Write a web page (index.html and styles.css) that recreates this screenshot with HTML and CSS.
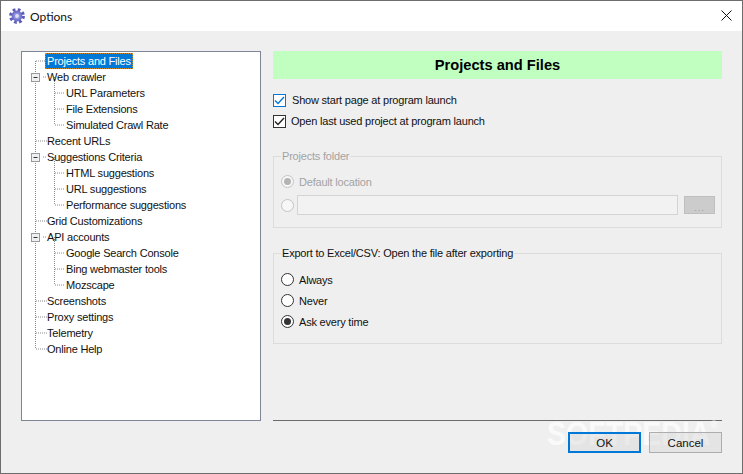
FILE: index.html
```html
<!DOCTYPE html>
<html lang="en">
<head>
<meta charset="utf-8">
<title>Options</title>
<link rel="stylesheet" href="styles.css">
</head>
<body>
<div class="window">
  <header class="titlebar">
    <svg class="app-icon" width="16" height="16" viewBox="0 0 16 16">
      <circle cx="8" cy="8" r="6.2" fill="none" stroke="#5c5cb8" stroke-width="3.4" stroke-dasharray="2.6 2.27"/>
      <circle cx="8" cy="8" r="5.4" fill="#6f70c8"/>
      <circle cx="8" cy="8" r="3.6" fill="#8d8fdc"/>
      <circle cx="8" cy="8" r="1.9" fill="#dfe0f5"/>
    </svg>
    <span class="title">Options</span>
    <svg class="close" width="11" height="11" viewBox="0 0 11 11">
      <path d="M0.5 0.5 L10.5 10.5 M10.5 0.5 L0.5 10.5" stroke="#111" stroke-width="1" fill="none"/>
    </svg>
  </header>
  <main class="content">
    <nav class="tree">
      <svg class="tree-lines" width="238" height="368" viewBox="0 0 238 368">
        <g class="dots">
          <path d="M13.5 9 V297"/>
          <path d="M32.5 25 V73 M32.5 105 V153 M32.5 185 V233"/>
          <path d="M14 9 H23 M21 25 H25 M14 89 H25 M21 105 H25 M14 169 H25 M21 185 H25 M14 249 H25 M14 265 H25 M14 281 H25 M14 297 H25"/>
          <path d="M33 41 H43 M33 57 H43 M33 73 H43 M33 121 H43 M33 137 H43 M33 153 H43 M33 201 H43 M33 217 H43 M33 233 H43"/>
        </g>
        <g class="expander">
          <rect x="9.5" y="21.5" width="8" height="8"/><path d="M11.5 25.5 H15.5"/>
          <rect x="9.5" y="101.5" width="8" height="8"/><path d="M11.5 105.5 H15.5"/>
          <rect x="9.5" y="181.5" width="8" height="8"/><path d="M11.5 185.5 H15.5"/>
        </g>
      </svg>
      <ul class="tree-list">
        <li class="node top"><span class="label selected">Projects and Files</span></li>
        <li class="node top"><span class="label">Web crawler</span></li>
        <li class="node sub"><span class="label">URL Parameters</span></li>
        <li class="node sub"><span class="label">File Extensions</span></li>
        <li class="node sub"><span class="label">Simulated Crawl Rate</span></li>
        <li class="node top"><span class="label">Recent URLs</span></li>
        <li class="node top"><span class="label">Suggestions Criteria</span></li>
        <li class="node sub"><span class="label">HTML suggestions</span></li>
        <li class="node sub"><span class="label">URL suggestions</span></li>
        <li class="node sub"><span class="label">Performance suggestions</span></li>
        <li class="node top"><span class="label">Grid Customizations</span></li>
        <li class="node top"><span class="label">API accounts</span></li>
        <li class="node sub"><span class="label">Google Search Console</span></li>
        <li class="node sub"><span class="label">Bing webmaster tools</span></li>
        <li class="node sub"><span class="label">Mozscape</span></li>
        <li class="node top"><span class="label">Screenshots</span></li>
        <li class="node top"><span class="label">Proxy settings</span></li>
        <li class="node top"><span class="label">Telemetry</span></li>
        <li class="node top"><span class="label">Online Help</span></li>
      </ul>
    </nav>
    <section class="panel">
      <h1 class="panel-title">Projects and Files</h1>
      <div class="checks">
        <div class="check-row">
          <span class="checkbox hover"><svg width="11" height="11" viewBox="0 0 11 11"><path d="M1 5.5 L4 8.5 L10 2" fill="none" stroke="#0078d7" stroke-width="1.4"/></svg></span>
          <span class="check-label">Show start page at program launch</span>
        </div>
        <div class="check-row second">
          <span class="checkbox"><svg width="11" height="11" viewBox="0 0 11 11"><path d="M1 5.5 L4 8.5 L10 2" fill="none" stroke="#222" stroke-width="1.4"/></svg></span>
          <span class="check-label">Open last used project at program launch</span>
        </div>
      </div>
      <div class="group folder">
        <span class="legend disabled">Projects folder</span>
        <div class="radio-row disabled-row">
          <span class="radio off on"></span>
          <span class="radio-label disabled">Default location</span>
        </div>
        <div class="path-row">
          <span class="radio off"></span>
          <span class="path-input"></span>
          <span class="browse">...</span>
        </div>
      </div>
      <div class="group export">
        <span class="legend">Export to Excel/CSV: Open the file after exporting</span>
        <div class="radio-row"><span class="radio"></span><span class="radio-label">Always</span></div>
        <div class="radio-row"><span class="radio"></span><span class="radio-label">Never</span></div>
        <div class="radio-row"><span class="radio on"></span><span class="radio-label">Ask every time</span></div>
      </div>
      <div class="spacer"></div>
      <hr class="divider">
      <div class="buttons">
        <button class="btn ok" type="button">OK</button>
        <button class="btn cancel" type="button">Cancel</button>
      </div>
    </section>
  </main>
  <div class="watermark">SOFTPEDIA<sup class="reg">®</sup></div>
</div>
</body>
</html>
```

FILE: styles.css
```css
* { box-sizing: border-box; }
html, body { margin: 0; padding: 0; }
body {
  width: 743px;
  height: 474px;
  overflow: hidden;
  font-family: "Liberation Sans", Arial, sans-serif;
  font-size: 11px;
  letter-spacing: -0.2px;
  color: #111;
}
.window {
  position: relative;
  width: 743px;
  height: 474px;
  display: flex;
  flex-direction: column;
  background: #efefef;
  border: 1px solid #6d6d6d;
  overflow: hidden;
}
.titlebar {
  flex: none;
  height: 30px;
  background: #fff;
  display: flex;
  align-items: center;
  padding: 0 10px 0 8px;
}
.app-icon { flex: none; margin-right: 5px; }
.title { flex: 1; font-family: "Lato", "Open Sans", sans-serif; font-size: 12px; letter-spacing: 0; }
.close { flex: none; margin-bottom: 1px; }

.content {
  flex: 1;
  display: flex;
  gap: 12px;
  padding: 20px 20px 20px 20px;
  min-height: 0;
}
.tree {
  position: relative;
  flex: none;
  width: 240px;
  height: 370px;
  background: #fff;
  border: 1px solid #7f8796;
}
.tree-lines { position: absolute; left: 0; top: 0; }
.dots path { stroke: #8a8a8a; stroke-width: 1; stroke-dasharray: 1 1; fill: none; }
.expander rect { fill: #eef0f2; stroke: #9a9a9a; stroke-width: 1; }
.expander path { stroke: #333; stroke-width: 1; fill: none; }
.tree-list { position: relative; list-style: none; margin: 0; padding: 1px 0 0; }
.node { height: 16px; line-height: 16px; white-space: nowrap; }
.node.top { padding-left: 23px; }
.node.sub { padding-left: 42px; }
.label { display: inline-block; height: 16px; padding: 0 2px; }
.label.selected {
  background: #0078d7;
  color: #fff;
  outline: 1px dotted #c98a2b;
  outline-offset: -1px;
}

.panel { flex: 1; display: flex; flex-direction: column; min-width: 0; }
.panel-title {
  margin: 0;
  height: 28px;
  background: #c0ffc0;
  text-align: center;
  font-size: 14.67px;
  font-weight: 700;
  line-height: 28px;
  letter-spacing: 0;
  color: #000;
}
.checks { padding-top: 13px; }
.check-row { display: flex; align-items: center; height: 16px; gap: 6px; }
.check-row.second { margin-top: 5px; gap: 5px; }
.checkbox {
  flex: none;
  width: 13px;
  height: 13px;
  border: 1px solid #333;
  background: #fff;
  display: flex;
  align-items: center;
  justify-content: center;
}
.checkbox.hover { border-color: #0078d7; }
.check-label { line-height: 16px; }

.group {
  position: relative;
  border: 1px solid #dcdcdc;
  padding-left: 7px;
}
.group.folder { margin-top: 27px; height: 72px; padding-top: 14px; }
.group.export { margin-top: 25px; height: 91px; border-color: #dcdcdc; padding-top: 15px; }
.legend {
  position: absolute;
  left: 7px;
  top: -9px;
  padding: 0 1px;
  line-height: 16px;
  background: #efefef;
}
.disabled { color: #a3a3a3; }
.radio-row { display: flex; align-items: center; height: 21px; gap: 5px; }
.radio {
  flex: none;
  position: relative;
  width: 13px;
  height: 13px;
  border-radius: 50%;
  border: 1px solid #333;
  background: #fff;
  display: flex;
  align-items: center;
  justify-content: center;
}
.radio.on::after {
  content: "";
  width: 7px;
  height: 7px;
  border-radius: 50%;
  background: #333;
}
.radio.off { border-color: #c4c4c4; background: #f7f7f7; }
.radio.off.on::after { background: #b4b4b4; }
.path-row { display: flex; align-items: center; height: 20px; margin-top: 3px; }
.path-input {
  flex: none;
  width: 381px;
  height: 20px;
  margin-left: 3px;
  background: #f2f2f2;
  border: 1px solid #d4d4d4;
}
.browse {
  flex: none;
  width: 31px;
  height: 18px;
  margin-left: 6px;
  background: #cccccc;
  border: 1px solid #bfbfbf;
  color: #9a9a9a;
  text-align: center;
  line-height: 22px;
  font-size: 9px;
  letter-spacing: 1px;
}
.spacer { flex: 1; }
.divider { margin: 0; border: 0; height: 1px; background: #6b6b6b; flex: none; }
.buttons {
  position: relative;
  z-index: 1;
  flex: none;
  display: flex;
  justify-content: flex-end;
  gap: 8px;
  height: 32px;
  padding-top: 11px;
}
.btn {
  height: 21px;
  padding: 0;
  font: inherit;
  font-size: 11.5px;
  color: #111;
  background: rgba(216, 216, 216, 0.45);
}
.btn.ok { width: 73px; border: 2px solid #0078d7; }
.btn.cancel { width: 73px; border: 1px solid #adadad; }

.watermark {
  position: absolute;
  left: 546px;
  top: 413px;
  font-weight: 700;
  font-size: 34px;
  line-height: 38px;
  letter-spacing: 0;
  color: rgba(255, 255, 255, 0.7);
  white-space: nowrap;
  pointer-events: none;
  transform: scaleX(0.84);
  transform-origin: left center;
}
.reg { font-size: 11px; vertical-align: top; line-height: 20px; }
```
